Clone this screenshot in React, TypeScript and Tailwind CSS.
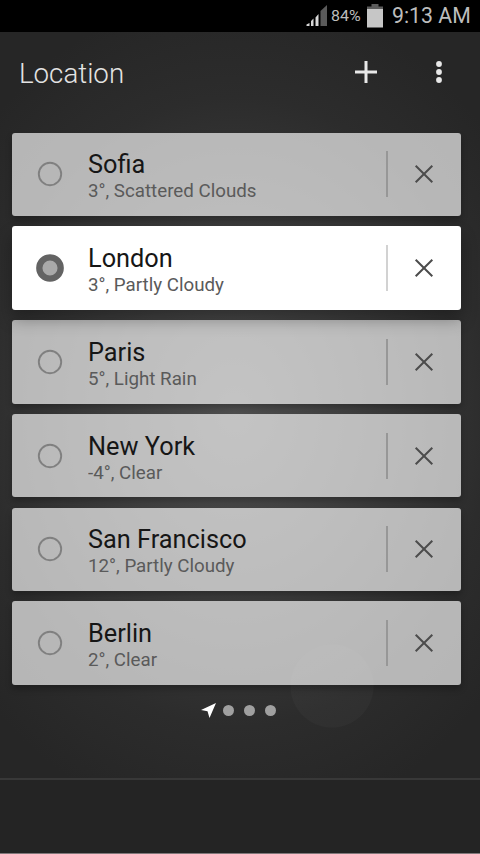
interface Place {
  name: string;
  detail: string;
  selected?: boolean;
}

const places: Place[] = [
  { name: "Sofia", detail: "3°, Scattered Clouds" },
  { name: "London", detail: "3°, Partly Cloudy", selected: true },
  { name: "Paris", detail: "5°, Light Rain" },
  { name: "New York", detail: "-4°, Clear" },
  { name: "San Francisco", detail: "12°, Partly Cloudy" },
  { name: "Berlin", detail: "2°, Clear" },
];

function StatusBar() {
  return (
    <div className="flex h-8 items-center justify-end bg-black pr-[9px] text-[#bdbdbd]">
      <svg width="22" height="22" viewBox="0 0 22 22" className="mr-[3px]">
        <path d="M14.5 21V6L21 0V21Z" fill="#5a5a5a" />
        <path d="M0.500 21v-1.500l3-1.500v3zM5 21v-5l2.500-2.500v7.500zM9.500 21v-8.500l3-3.500v12z" fill="#d8d8d8" />
      </svg>
      <span className="w-[30px] whitespace-nowrap text-[15.500px] leading-8"><span className="inline-block origin-left scale-x-[1.03]">84%</span></span>
      <svg width="18" height="25" viewBox="0 0 18 25" className="-mt-[1px] ml-[5px] mr-[8px]">
        <path d="M5.500 1h7v2.500h4.500v3h-16v-3h4.500z" fill="#5c5c5c" />
        <path d="M1 6h16v18.500H1z" fill="#c6c6c6" />
      </svg>
      <span className="-mt-[2px] w-[79px] whitespace-nowrap text-[22.500px] leading-[30px]"><span className="inline-block origin-left scale-x-[0.945]">9:13 AM</span></span>
    </div>
  );
}

function Header() {
  return (
    <header className="flex h-[82px] items-center pl-[19px] pr-[33px] text-[#e3e3e3]">
      <h1 className="flex-1 pt-[2px] text-[27.700px] font-light leading-8">Location</h1>
      <svg width="24" height="24" viewBox="0 0 24 24" className="-mt-[2px] mr-[53px]">
        <path d="M12 1v22M1 12h22" stroke="#e8e8e8" strokeWidth="3" />
      </svg>
      <svg width="16" height="24" viewBox="0 0 16 24" className="-mt-[2px]">
        <g fill="#e8e8e8">
          <circle cx="8" cy="4" r="2.900" />
          <circle cx="8" cy="12" r="2.900" />
          <circle cx="8" cy="20" r="2.900" />
        </g>
      </svg>
    </header>
  );
}

function PlaceCard({ place }: { place: Place }) {
  const tone = place.selected
    ? "z-10 bg-white shadow-[0_10px_16px_rgba(0,0,0,0.3)]"
    : "bg-white/66 shadow-[0_4px_6px_rgba(0,0,0,0.25)]";
  return (
    <li className={`relative flex h-[83.500px] items-center rounded-[3px] pl-6 ${tone}`}>
      <svg width="28" height="28" viewBox="0 0 28 28" className="mr-6 shrink-0">
        {place.selected ? (
          <circle cx="14" cy="14" r="10.700" fill="#a9a9a9" stroke="#636363" strokeWidth="6.300" />
        ) : (
          <circle cx="14" cy="14" r="11.200" fill="none" stroke="#808080" strokeWidth="1.900" />
        )}
      </svg>
      <div className="flex-1 whitespace-nowrap pt-[6px]">
        <div className="origin-left scale-x-[0.974] text-[26px] leading-[27px] text-[#161616]">{place.name}</div>
        <div className="origin-left scale-x-[0.986] text-[19px] leading-[25px] text-[#5a5a5a]">{place.detail}</div>
      </div>
      <div className={`h-[46px] w-[2px] ${place.selected ? "bg-[#d2d2d2]" : "bg-[#979797]"}`} />
      <svg width="20" height="20" viewBox="0 0 20 20" className="ml-[26px] mr-[27px]">
        <path d="M1.700 1.700l16.600 16.600M18.300 1.700L1.700 18.300" stroke="#4c4c4c" strokeWidth="2" />
      </svg>
    </li>
  );
}

function Pager() {
  return (
    <div className="mt-[16.500px] flex h-[18px] items-center pl-[200px]">
      <svg width="17" height="17" viewBox="0 0 17 17" className="mr-[6px]">
        <path d="M16 1L9.500 16L7.500 9.300L1 8Z" fill="#fff" />
      </svg>
      <div className="flex gap-[10px]">
        <span className="size-[11px] rounded-full bg-[#a0a0a0]" />
        <span className="size-[11px] rounded-full bg-[#a0a0a0]" />
        <span className="size-[11px] rounded-full bg-[#a0a0a0]" />
      </div>
    </div>
  );
}

export default function App() {
  return (
    <div className="flex h-[854px] w-[480px] flex-col overflow-hidden bg-[#262626] font-['Roboto',sans-serif]">
      <StatusBar />
      <main className="flex h-[746px] flex-col bg-[radial-gradient(circle_at_332px_654px,#ffffff06_0,#ffffff06_41px,transparent_42px),radial-gradient(ellipse_340px_420px_at_235px_380px,#505050_0%,#404040_35%,#2c2c2c_75%,#262626_100%)]">
        <Header />
        <ul className="mt-[18.500px] flex flex-col gap-[10.250px] pl-3 pr-[19px]">
          {places.map((place) => (
            <PlaceCard key={place.name} place={place} />
          ))}
        </ul>
        <Pager />
      </main>
      <footer className="flex-1 border-b border-t-2 border-b-[#80787a] border-t-[#383838] bg-[#242424]" />
    </div>
  );
}
